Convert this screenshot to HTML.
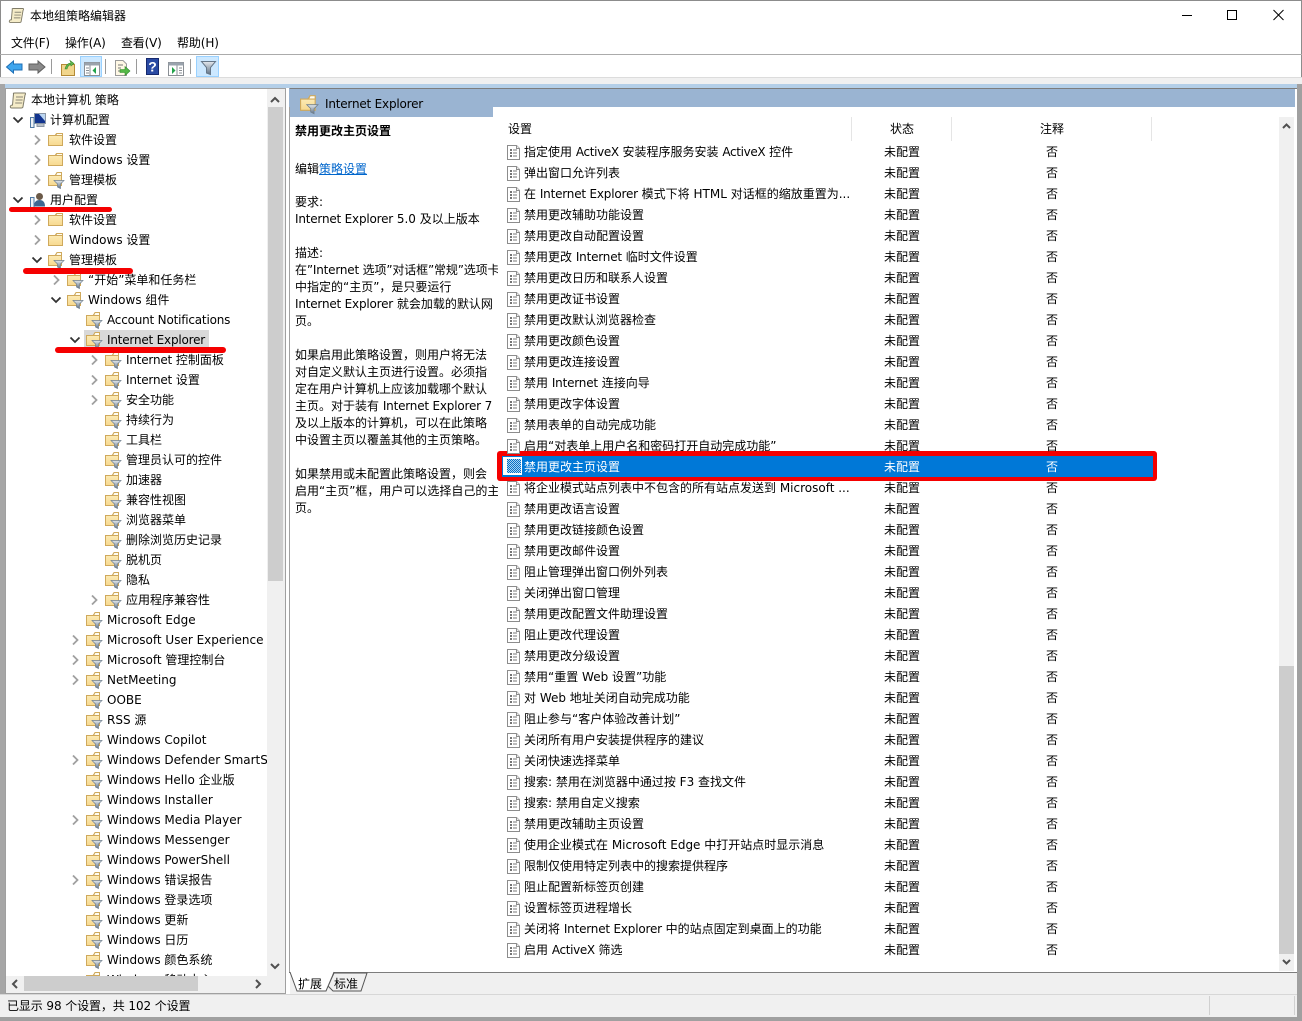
<!DOCTYPE html>
<html lang="zh"><head><meta charset="utf-8"><title>本地组策略编辑器</title>
<style>
html,body{margin:0;padding:0;width:1302px;height:1021px;overflow:hidden;background:#fff}
body{position:relative;font:12px/20px "DejaVu Sans","Noto Sans CJK SC",sans-serif;color:#000}
em{font-style:normal;letter-spacing:-.2px}
em.x{letter-spacing:-.35px}
.a{position:absolute;white-space:nowrap}
svg{position:absolute;overflow:visible}
#tree{position:absolute;left:6px;top:90px;width:261px;height:886px;overflow:hidden;background:#fff}
#tree>div{margin-left:-6px}
.n{position:relative;height:20px;white-space:nowrap}
.n svg{top:0;left:0}
.n span{position:absolute;top:0;white-space:nowrap}
.l0 span{left:50px}.l1 span{left:69px}.l2 span{left:88px}.l3 span{left:107px}.l4 span{left:126px}
#list{position:absolute;left:498px;top:142px;width:781px;height:829px;overflow:hidden}
.r{position:relative;height:21px;line-height:21px;white-space:nowrap}
.r b,.r i,.r u{position:absolute;top:0;font-weight:normal;font-style:normal;text-decoration:none}
.r b{left:26px;width:330px;overflow:hidden}.r i{left:386px}.r u{left:548px}
.r svg{left:9px;top:3px}
#d{position:absolute;left:0;top:1px}
#d div{position:absolute;left:295px;white-space:nowrap;width:203px;overflow:hidden;line-height:17px}
</style></head><body>
<svg width="0" height="0" style="position:absolute">
<defs>
<linearGradient id="fg" x1="0" y1="0" x2="0" y2="1"><stop offset="0" stop-color="#fdeebc"/><stop offset="1" stop-color="#f7d98f"/></linearGradient>
<linearGradient id="fl" x1="0" y1="0" x2="0" y2="1"><stop offset="0" stop-color="#e4e9ee"/><stop offset="1" stop-color="#5f7183"/></linearGradient>
<pattern id="dith" width="2" height="2" patternUnits="userSpaceOnUse"><rect width="2" height="2" fill="#0a6fc4"/><rect width="1" height="1" fill="#a8d4f3"/><rect x="1" y="1" width="1" height="1" fill="#a8d4f3"/></pattern>
<symbol id="folder" viewBox="0 0 16 16" overflow="visible"><path d="M.5 4.500V14.500H14.500V2.500H8.500L7 4.500Z" fill="url(#fg)" stroke="#cfa95c"/><path d="M9 2.500h5.500V4.500H7.500Z" fill="#fffdf2" stroke="#cfa95c"/></symbol>
<symbol id="ffolder" viewBox="0 0 16 16" overflow="visible"><path d="M.5 4.500V14.500H13.500V2.500H8.500L7 4.500Z" fill="url(#fg)" stroke="#cfa95c"/><path d="M9 1.500h4.500V4.500H7.500Z" fill="#fffdf2" stroke="#cfa95c"/><path d="M6 9.500H16L12.500 13V17.500L9.500 16V13Z" fill="url(#fl)" stroke="#6f7f8e" stroke-width=".7"/></symbol>
<symbol id="doc" viewBox="0 0 13 15" overflow="visible"><path d="M.5.5H9.500L12.500 3.500V14.500H.5Z" fill="#fff" stroke="#8c8c8c"/><path d="M9.500.5V3.500H12.500" fill="#eee" stroke="#8c8c8c"/><path d="M3 5h2M3 8h2M3 11h2" stroke="#222" stroke-width="1.300"/><path d="M6 5h4M6 8h4M6 11h4" stroke="#777"/></symbol>
<symbol id="cr" viewBox="0 0 10 20" overflow="visible"><path d="M2 5.500L6.500 10L2 14.500" fill="none" stroke="#a0a0a0" stroke-width="1.800"/></symbol>
<symbol id="cd" viewBox="0 0 10 20" overflow="visible"><path d="M.5 7.500L5 12L9.500 7.500" fill="none" stroke="#333" stroke-width="1.800"/></symbol>
<symbol id="scroll" viewBox="0 0 16 16" overflow="visible"><path d="M3.500 1.500C3 .5 4 .5 5 .5H15C15.500 .5 15.800 1.500 15 2.500L13 14C13 15 12 15.500 11 15.500H1.500C.5 15.500 0 14.500 .5 13.500 1 12.500 2 12.500 2.500 12.500Z" fill="#f5ecc8" stroke="#7f7b68"/><path d="M6 4.500h7M5.600 7.500h7M5.200 10.500h7" stroke="#8a8676"/></symbol>
</defs></svg>

<!-- window frame -->
<div class="a" style="left:0;top:0;width:1302px;height:1px;background:#8c8c8c"></div>
<div class="a" style="left:0;top:0;width:1px;height:85px;background:#8c8c8c"></div>
<div class="a" style="left:1301px;top:0;width:1px;height:85px;background:#8c8c8c"></div>

<!-- title -->
<svg style="left:9px;top:7px" width="15" height="17"><use href="#scroll" width="15" height="17"/></svg>
<div class="a" style="left:30px;top:6px">本地组策略编辑器</div>
<svg style="left:1180px;top:9px" width="120" height="14"><path d="M2 6.500H12" stroke="#000"/><rect x="47.500" y="1.500" width="9" height="9" fill="none" stroke="#000"/><path d="M93.500 1L103.500 11M103.500 1L93.500 11" stroke="#000"/></svg>

<!-- menu -->
<div class="a" style="left:11px;top:33px;letter-spacing:-.3px">文件(F)</div>
<div class="a" style="left:65px;top:33px;letter-spacing:-.2px">操作(A)</div>
<div class="a" style="left:121px;top:33px;letter-spacing:-.2px">查看(V)</div>
<div class="a" style="left:177px;top:33px;letter-spacing:-.1px">帮助(H)</div>
<div class="a" style="left:0;top:54px;width:1302px;height:1px;background:#ababab"></div>

<!-- toolbar -->
<div class="a" style="left:80px;top:56px;width:22px;height:21px;background:#cce8ff;border:1px solid #99d1ff;box-sizing:border-box"></div>
<div class="a" style="left:196px;top:56px;width:23px;height:21px;background:#cce8ff;border:1px solid #99d1ff;box-sizing:border-box"></div>
<svg style="left:0;top:55px" width="230" height="23">
<path d="M6.500 12L13.500 6V9H22V15H13.500V18Z" fill="#3fa6ee" stroke="#1f6fb5"/>
<path d="M45 12L38 6V9H29V15H38V18Z" fill="#8a8a8a" stroke="#5f5f5f"/>
<path d="M51.500 4V19M105.500 4V19M136.500 4V19M190.500 4V19" stroke="#9a9a9a"/>
<path d="M61.500 9.500V20.500H74.500V9.500Z" fill="#f1d58b" stroke="#b48a35"/>
<path d="M65 14C66 10 68 8 71 8L70 5.500L74 8.500L71 11L70.500 9.500C69 10 67.500 12 67 14Z" fill="#5fb84d" stroke="#3b8a2e" stroke-width=".6"/>
<rect x="84.500" y="7.500" width="15" height="13" fill="#fff" stroke="#8a8f95"/><rect x="84.500" y="7.500" width="15" height="3" fill="#9aa3ad"/>
<path d="M90 10.500V20.500" stroke="#8a8f95"/><path d="M86 13h3M86 15.500h3M86 18h3" stroke="#8a8f95"/><path d="M96 12V19L92.500 15.500Z" fill="#22a34a"/>
<path d="M115.500 5.500H123L126.500 9V20.500H115.500Z" fill="#fff8e5" stroke="#9a9a9a"/><path d="M118 10h5M118 13h3M118 16h3" stroke="#777"/>
<path d="M120 14.500H125V11.500L130 16L125 20.500V17.500H120Z" fill="#55b947" stroke="#2f8b2a" stroke-width=".6"/>
<rect x="146.500" y="3.500" width="12" height="16" fill="#2a4aa3" stroke="#16296e"/>
<text x="152.500" y="16.500" font-family="Liberation Sans,sans-serif" font-size="14" font-weight="bold" fill="#fff" text-anchor="middle">?</text>
<rect x="168.500" y="7.500" width="15" height="13" fill="#fff" stroke="#8a8f95"/><rect x="168.500" y="7.500" width="15" height="3" fill="#9aa3ad"/>
<path d="M177 10.500V20.500" stroke="#8a8f95"/><path d="M179 13h3M179 15.500h3M179 18h3" stroke="#8a8f95"/><path d="M172 12V19L175.500 15.500Z" fill="#22a34a"/>
<path d="M201.500 6.500H215.500L210.500 12.500V19.500L206.500 18V12.500Z" fill="url(#fl)" stroke="#667788"/>
</svg>
<div class="a" style="left:0;top:77px;width:1302px;height:1px;background:#dcdcdc"></div>
<div class="a" style="left:0;top:78px;width:1302px;height:6px;background:#f0f0f0"></div>
<div class="a" style="left:5px;top:84px;width:1292px;height:4px;background:#b4cfe8"></div>
<div class="a" style="left:0;top:84px;width:5px;height:910px;background:#a6a6a6"></div>

<!-- left pane -->
<div class="a" style="left:5px;top:88px;width:279px;height:904px;border:1px solid #a0a0a0;background:#fff"></div>
<div id="tree">
<div class="n" style="height:20px"><svg style="left:10px;top:2px" width="16" height="17"><use href="#scroll" width="16" height="17"/></svg><span style="left:31px">本地计算机 策略</span></div>
<div class="n l0"><svg style="left:13px" width="10" height="20"><use href="#cd" width="10" height="20"/></svg><svg style="left:30px;top:2px" width="16" height="16"><path d="M4.500 1.500H15.500V11.500H4.500Z" fill="#12348f" stroke="#8a96a5"/><path d="M9 2h6v7z" fill="#bcd6f2"/><path d="M7 12V14.500H14V12" fill="#b9c0c8" stroke="#8a96a5"/><rect x=".5" y="5.500" width="3.500" height="10" fill="#eef2f6" stroke="#4f78a3"/></svg><span>计算机配置</span></div>
<div class="n l1"><svg style="left:33px" width="10" height="20"><use href="#cr" width="10" height="20"/></svg><svg style="left:48px;top:1px" width="16" height="16"><use href="#folder" width="16" height="16"/></svg><span>软件设置</span></div>
<div class="n l1"><svg style="left:33px" width="10" height="20"><use href="#cr" width="10" height="20"/></svg><svg style="left:48px;top:1px" width="16" height="16"><use href="#folder" width="16" height="16"/></svg><span>Windows 设置</span></div>
<div class="n l1"><svg style="left:33px" width="10" height="20"><use href="#cr" width="10" height="20"/></svg><svg style="left:48px;top:1px" width="16" height="16"><use href="#ffolder" width="16" height="16"/></svg><span>管理模板</span></div>
<div class="n l0"><svg style="left:13px" width="10" height="20"><use href="#cd" width="10" height="20"/></svg><svg style="left:30px;top:2px" width="16" height="16"><circle cx="9.500" cy="4.500" r="3.500" fill="#6b5a48"/><path d="M4 14.500C4 10 6 8 9.500 8S15 10 15 14.500Z" fill="#3e6690"/><rect x=".5" y="5.500" width="3.500" height="10" fill="#eef2f6" stroke="#4f78a3"/></svg><span>用户配置</span></div>
<div class="n l1"><svg style="left:33px" width="10" height="20"><use href="#cr" width="10" height="20"/></svg><svg style="left:48px;top:1px" width="16" height="16"><use href="#folder" width="16" height="16"/></svg><span>软件设置</span></div>
<div class="n l1"><svg style="left:33px" width="10" height="20"><use href="#cr" width="10" height="20"/></svg><svg style="left:48px;top:1px" width="16" height="16"><use href="#folder" width="16" height="16"/></svg><span>Windows 设置</span></div>
<div class="n l1"><svg style="left:32px" width="10" height="20"><use href="#cd" width="10" height="20"/></svg><svg style="left:48px;top:1px" width="16" height="16"><use href="#ffolder" width="16" height="16"/></svg><span>管理模板</span></div>
<div class="n l2"><svg style="left:52px" width="10" height="20"><use href="#cr" width="10" height="20"/></svg><svg style="left:67px;top:1px" width="16" height="16"><use href="#ffolder" width="16" height="16"/></svg><span>“开始”菜单和任务栏</span></div>
<div class="n l2"><svg style="left:51px" width="10" height="20"><use href="#cd" width="10" height="20"/></svg><svg style="left:67px;top:1px" width="16" height="16"><use href="#ffolder" width="16" height="16"/></svg><span>Windows 组件</span></div>
<div class="n l3"><svg style="left:86px;top:1px" width="16" height="16"><use href="#ffolder" width="16" height="16"/></svg><span><em>Account Notifications</em></span></div>
<div class="n l3"><div style="position:absolute;left:84px;top:0;width:125px;height:19px;background:#d9d9d9"></div><svg style="left:70px" width="10" height="20"><use href="#cd" width="10" height="20"/></svg><svg style="left:86px;top:1px" width="16" height="16"><use href="#ffolder" width="16" height="16"/></svg><span><em>Internet Explorer</em></span></div>
<div class="n l4"><svg style="left:90px" width="10" height="20"><use href="#cr" width="10" height="20"/></svg><svg style="left:105px;top:1px" width="16" height="16"><use href="#ffolder" width="16" height="16"/></svg><span><em>Internet</em> 控制面板</span></div>
<div class="n l4"><svg style="left:90px" width="10" height="20"><use href="#cr" width="10" height="20"/></svg><svg style="left:105px;top:1px" width="16" height="16"><use href="#ffolder" width="16" height="16"/></svg><span><em>Internet</em> 设置</span></div>
<div class="n l4"><svg style="left:90px" width="10" height="20"><use href="#cr" width="10" height="20"/></svg><svg style="left:105px;top:1px" width="16" height="16"><use href="#ffolder" width="16" height="16"/></svg><span>安全功能</span></div>
<div class="n l4"><svg style="left:105px;top:1px" width="16" height="16"><use href="#ffolder" width="16" height="16"/></svg><span>持续行为</span></div>
<div class="n l4"><svg style="left:105px;top:1px" width="16" height="16"><use href="#ffolder" width="16" height="16"/></svg><span>工具栏</span></div>
<div class="n l4"><svg style="left:105px;top:1px" width="16" height="16"><use href="#ffolder" width="16" height="16"/></svg><span>管理员认可的控件</span></div>
<div class="n l4"><svg style="left:105px;top:1px" width="16" height="16"><use href="#ffolder" width="16" height="16"/></svg><span>加速器</span></div>
<div class="n l4"><svg style="left:105px;top:1px" width="16" height="16"><use href="#ffolder" width="16" height="16"/></svg><span>兼容性视图</span></div>
<div class="n l4"><svg style="left:105px;top:1px" width="16" height="16"><use href="#ffolder" width="16" height="16"/></svg><span>浏览器菜单</span></div>
<div class="n l4"><svg style="left:105px;top:1px" width="16" height="16"><use href="#ffolder" width="16" height="16"/></svg><span>删除浏览历史记录</span></div>
<div class="n l4"><svg style="left:105px;top:1px" width="16" height="16"><use href="#ffolder" width="16" height="16"/></svg><span>脱机页</span></div>
<div class="n l4"><svg style="left:105px;top:1px" width="16" height="16"><use href="#ffolder" width="16" height="16"/></svg><span>隐私</span></div>
<div class="n l4"><svg style="left:90px" width="10" height="20"><use href="#cr" width="10" height="20"/></svg><svg style="left:105px;top:1px" width="16" height="16"><use href="#ffolder" width="16" height="16"/></svg><span>应用程序兼容性</span></div>
<div class="n l3"><svg style="left:86px;top:1px" width="16" height="16"><use href="#ffolder" width="16" height="16"/></svg><span>Microsoft Edge</span></div>
<div class="n l3"><svg style="left:71px" width="10" height="20"><use href="#cr" width="10" height="20"/></svg><svg style="left:86px;top:1px" width="16" height="16"><use href="#ffolder" width="16" height="16"/></svg><span>Microsoft User Experience Virtualization</span></div>
<div class="n l3"><svg style="left:71px" width="10" height="20"><use href="#cr" width="10" height="20"/></svg><svg style="left:86px;top:1px" width="16" height="16"><use href="#ffolder" width="16" height="16"/></svg><span>Microsoft 管理控制台</span></div>
<div class="n l3"><svg style="left:71px" width="10" height="20"><use href="#cr" width="10" height="20"/></svg><svg style="left:86px;top:1px" width="16" height="16"><use href="#ffolder" width="16" height="16"/></svg><span>NetMeeting</span></div>
<div class="n l3"><svg style="left:86px;top:1px" width="16" height="16"><use href="#ffolder" width="16" height="16"/></svg><span>OOBE</span></div>
<div class="n l3"><svg style="left:86px;top:1px" width="16" height="16"><use href="#ffolder" width="16" height="16"/></svg><span>RSS 源</span></div>
<div class="n l3"><svg style="left:86px;top:1px" width="16" height="16"><use href="#ffolder" width="16" height="16"/></svg><span>Windows Copilot</span></div>
<div class="n l3"><svg style="left:71px" width="10" height="20"><use href="#cr" width="10" height="20"/></svg><svg style="left:86px;top:1px" width="16" height="16"><use href="#ffolder" width="16" height="16"/></svg><span>Windows Defender SmartScreen</span></div>
<div class="n l3"><svg style="left:86px;top:1px" width="16" height="16"><use href="#ffolder" width="16" height="16"/></svg><span>Windows Hello 企业版</span></div>
<div class="n l3"><svg style="left:86px;top:1px" width="16" height="16"><use href="#ffolder" width="16" height="16"/></svg><span>Windows Installer</span></div>
<div class="n l3"><svg style="left:71px" width="10" height="20"><use href="#cr" width="10" height="20"/></svg><svg style="left:86px;top:1px" width="16" height="16"><use href="#ffolder" width="16" height="16"/></svg><span>Windows Media Player</span></div>
<div class="n l3"><svg style="left:86px;top:1px" width="16" height="16"><use href="#ffolder" width="16" height="16"/></svg><span>Windows Messenger</span></div>
<div class="n l3"><svg style="left:86px;top:1px" width="16" height="16"><use href="#ffolder" width="16" height="16"/></svg><span>Windows PowerShell</span></div>
<div class="n l3"><svg style="left:71px" width="10" height="20"><use href="#cr" width="10" height="20"/></svg><svg style="left:86px;top:1px" width="16" height="16"><use href="#ffolder" width="16" height="16"/></svg><span>Windows 错误报告</span></div>
<div class="n l3"><svg style="left:86px;top:1px" width="16" height="16"><use href="#ffolder" width="16" height="16"/></svg><span>Windows 登录选项</span></div>
<div class="n l3"><svg style="left:86px;top:1px" width="16" height="16"><use href="#ffolder" width="16" height="16"/></svg><span>Windows 更新</span></div>
<div class="n l3"><svg style="left:86px;top:1px" width="16" height="16"><use href="#ffolder" width="16" height="16"/></svg><span>Windows 日历</span></div>
<div class="n l3"><svg style="left:86px;top:1px" width="16" height="16"><use href="#ffolder" width="16" height="16"/></svg><span>Windows 颜色系统</span></div>
<div class="n l3"><svg style="left:86px;top:1px" width="16" height="16"><use href="#ffolder" width="16" height="16"/></svg><span>Windows 移动中心</span></div>
</div>
<!-- left scrollbars -->
<div class="a" style="left:267px;top:89px;width:18px;height:887px;background:#f0f0f0"></div>
<div class="a" style="left:268px;top:107px;width:15px;height:474px;background:#cdcdcd"></div>
<div class="a" style="left:6px;top:976px;width:279px;height:17px;background:#f0f0f0"></div>
<div class="a" style="left:24px;top:976px;width:174px;height:15px;background:#cdcdcd"></div>
<svg style="left:0;top:88px" width="290" height="905"><g fill="none" stroke="#505050" stroke-width="2"><path d="M271 14L275 10L279 14"/><path d="M271 876L275 880L279 876"/><path d="M17 892L13 896L17 900"/><path d="M256 892L260 896L256 900"/></g></svg>

<!-- right pane -->
<div class="a" style="left:289px;top:88px;width:1008px;height:1px;background:#7d7d7d"></div>
<div class="a" style="left:289px;top:88px;width:1px;height:885px;background:#a0a0a0"></div>
<div class="a" style="left:289px;top:89px;width:1006px;height:18px;background:#9ab4d2"></div>
<div class="a" style="left:290px;top:107px;width:203px;height:10px;background:#9ab4d2"></div>
<div class="a" style="left:493px;top:107px;width:802px;height:12px;background:#fff;border-top-left-radius:8px"></div>
<svg style="left:300px;top:94px" width="18" height="18"><use href="#ffolder" width="18" height="18"/></svg>
<div class="a" style="left:325px;top:94px"><em>Internet Explorer</em></div>

<div id="d">
<div style="top:122px;font-weight:bold">禁用更改主页设置</div>
<div style="top:160px">编辑<span style="color:#0066cc;text-decoration:underline">策略设置</span></div>
<div style="top:193px">要求:</div>
<div style="top:210px"><em>Internet Explorer</em> 5.0 及以上版本</div>
<div style="top:244px">描述:</div>
<div style="top:261px;letter-spacing:-.15px">在”<em>Internet</em> 选项”对话框”常规”选项卡</div>
<div style="top:278px">中指定的“主页”，是只要运行</div>
<div style="top:295px"><em>Internet Explorer</em> 就会加载的默认网</div>
<div style="top:312px">页。</div>
<div style="top:346px">如果启用此策略设置，则用户将无法</div>
<div style="top:363px">对自定义默认主页进行设置。必须指</div>
<div style="top:380px">定在用户计算机上应该加载哪个默认</div>
<div style="top:397px">主页。对于装有 <em>Internet Explorer</em> 7</div>
<div style="top:414px">及以上版本的计算机，可以在此策略</div>
<div style="top:431px">中设置主页以覆盖其他的主页策略。</div>
<div style="top:465px">如果禁用或未配置此策略设置，则会</div>
<div style="top:482px">启用“主页”框，用户可以选择自己的主</div>
<div style="top:499px">页。</div>
</div>

<!-- list header -->
<div class="a" style="left:508px;top:119px">设置</div>
<div class="a" style="left:890px;top:119px">状态</div>
<div class="a" style="left:1040px;top:119px">注释</div>
<div class="a" style="left:851px;top:117px;width:1px;height:24px;background:#e5e5e5"></div>
<div class="a" style="left:951px;top:117px;width:1px;height:24px;background:#e5e5e5"></div>
<div class="a" style="left:1151px;top:117px;width:1px;height:24px;background:#e5e5e5"></div>

<!-- selection highlight -->
<div class="a" style="left:497px;top:451px;width:660px;height:30px;background:#f50000;border-radius:3px"></div>
<div class="a" style="left:502px;top:456px;width:651px;height:21px;background:#0078d7"></div>

<div id="list">
<div class="r"><svg width="13" height="15"><use href="#doc" width="13" height="15"/></svg><b>指定使用 <em class="x">ActiveX</em> 安装程序服务安装 <em class="x">ActiveX</em> 控件</b><i>未配置</i><u>否</u></div>
<div class="r"><svg width="13" height="15"><use href="#doc" width="13" height="15"/></svg><b>弹出窗口允许列表</b><i>未配置</i><u>否</u></div>
<div class="r"><svg width="13" height="15"><use href="#doc" width="13" height="15"/></svg><b>在 <em>Internet Explorer</em> 模式下将 HTML 对话框的缩放重置为...</b><i>未配置</i><u>否</u></div>
<div class="r"><svg width="13" height="15"><use href="#doc" width="13" height="15"/></svg><b>禁用更改辅助功能设置</b><i>未配置</i><u>否</u></div>
<div class="r"><svg width="13" height="15"><use href="#doc" width="13" height="15"/></svg><b>禁用更改自动配置设置</b><i>未配置</i><u>否</u></div>
<div class="r"><svg width="13" height="15"><use href="#doc" width="13" height="15"/></svg><b>禁用更改 <em>Internet</em> 临时文件设置</b><i>未配置</i><u>否</u></div>
<div class="r"><svg width="13" height="15"><use href="#doc" width="13" height="15"/></svg><b>禁用更改日历和联系人设置</b><i>未配置</i><u>否</u></div>
<div class="r"><svg width="13" height="15"><use href="#doc" width="13" height="15"/></svg><b>禁用更改证书设置</b><i>未配置</i><u>否</u></div>
<div class="r"><svg width="13" height="15"><use href="#doc" width="13" height="15"/></svg><b>禁用更改默认浏览器检查</b><i>未配置</i><u>否</u></div>
<div class="r"><svg width="13" height="15"><use href="#doc" width="13" height="15"/></svg><b>禁用更改颜色设置</b><i>未配置</i><u>否</u></div>
<div class="r"><svg width="13" height="15"><use href="#doc" width="13" height="15"/></svg><b>禁用更改连接设置</b><i>未配置</i><u>否</u></div>
<div class="r"><svg width="13" height="15"><use href="#doc" width="13" height="15"/></svg><b>禁用 <em>Internet</em> 连接向导</b><i>未配置</i><u>否</u></div>
<div class="r"><svg width="13" height="15"><use href="#doc" width="13" height="15"/></svg><b>禁用更改字体设置</b><i>未配置</i><u>否</u></div>
<div class="r"><svg width="13" height="15"><use href="#doc" width="13" height="15"/></svg><b>禁用表单的自动完成功能</b><i>未配置</i><u>否</u></div>
<div class="r"><svg width="13" height="15"><use href="#doc" width="13" height="15"/></svg><b>启用“对表单上用户名和密码打开自动完成功能”</b><i>未配置</i><u>否</u></div>
<div class="r" style="color:#fff"><svg width="13" height="15"><rect x="-4" y="-3" width="19" height="18" fill="#fff"/><rect y="-1" width="14" height="14" fill="url(#dith)"/></svg><b>禁用更改主页设置</b><i>未配置</i><u>否</u></div>
<div class="r"><svg width="13" height="15"><use href="#doc" width="13" height="15"/></svg><b>将企业模式站点列表中不包含的所有站点发送到 Microsoft ...</b><i>未配置</i><u>否</u></div>
<div class="r"><svg width="13" height="15"><use href="#doc" width="13" height="15"/></svg><b>禁用更改语言设置</b><i>未配置</i><u>否</u></div>
<div class="r"><svg width="13" height="15"><use href="#doc" width="13" height="15"/></svg><b>禁用更改链接颜色设置</b><i>未配置</i><u>否</u></div>
<div class="r"><svg width="13" height="15"><use href="#doc" width="13" height="15"/></svg><b>禁用更改邮件设置</b><i>未配置</i><u>否</u></div>
<div class="r"><svg width="13" height="15"><use href="#doc" width="13" height="15"/></svg><b>阻止管理弹出窗口例外列表</b><i>未配置</i><u>否</u></div>
<div class="r"><svg width="13" height="15"><use href="#doc" width="13" height="15"/></svg><b>关闭弹出窗口管理</b><i>未配置</i><u>否</u></div>
<div class="r"><svg width="13" height="15"><use href="#doc" width="13" height="15"/></svg><b>禁用更改配置文件助理设置</b><i>未配置</i><u>否</u></div>
<div class="r"><svg width="13" height="15"><use href="#doc" width="13" height="15"/></svg><b>阻止更改代理设置</b><i>未配置</i><u>否</u></div>
<div class="r"><svg width="13" height="15"><use href="#doc" width="13" height="15"/></svg><b>禁用更改分级设置</b><i>未配置</i><u>否</u></div>
<div class="r"><svg width="13" height="15"><use href="#doc" width="13" height="15"/></svg><b>禁用“重置 Web 设置”功能</b><i>未配置</i><u>否</u></div>
<div class="r"><svg width="13" height="15"><use href="#doc" width="13" height="15"/></svg><b>对 Web 地址关闭自动完成功能</b><i>未配置</i><u>否</u></div>
<div class="r"><svg width="13" height="15"><use href="#doc" width="13" height="15"/></svg><b>阻止参与“客户体验改善计划”</b><i>未配置</i><u>否</u></div>
<div class="r"><svg width="13" height="15"><use href="#doc" width="13" height="15"/></svg><b>关闭所有用户安装提供程序的建议</b><i>未配置</i><u>否</u></div>
<div class="r"><svg width="13" height="15"><use href="#doc" width="13" height="15"/></svg><b>关闭快速选择菜单</b><i>未配置</i><u>否</u></div>
<div class="r"><svg width="13" height="15"><use href="#doc" width="13" height="15"/></svg><b>搜索: 禁用在浏览器中通过按 F3 查找文件</b><i>未配置</i><u>否</u></div>
<div class="r"><svg width="13" height="15"><use href="#doc" width="13" height="15"/></svg><b>搜索: 禁用自定义搜索</b><i>未配置</i><u>否</u></div>
<div class="r"><svg width="13" height="15"><use href="#doc" width="13" height="15"/></svg><b>禁用更改辅助主页设置</b><i>未配置</i><u>否</u></div>
<div class="r"><svg width="13" height="15"><use href="#doc" width="13" height="15"/></svg><b>使用企业模式在 Microsoft Edge 中打开站点时显示消息</b><i>未配置</i><u>否</u></div>
<div class="r"><svg width="13" height="15"><use href="#doc" width="13" height="15"/></svg><b>限制仅使用特定列表中的搜索提供程序</b><i>未配置</i><u>否</u></div>
<div class="r"><svg width="13" height="15"><use href="#doc" width="13" height="15"/></svg><b>阻止配置新标签页创建</b><i>未配置</i><u>否</u></div>
<div class="r"><svg width="13" height="15"><use href="#doc" width="13" height="15"/></svg><b>设置标签页进程增长</b><i>未配置</i><u>否</u></div>
<div class="r"><svg width="13" height="15"><use href="#doc" width="13" height="15"/></svg><b>关闭将 <em>Internet Explorer</em> 中的站点固定到桌面上的功能</b><i>未配置</i><u>否</u></div>
<div class="r"><svg width="13" height="15"><use href="#doc" width="13" height="15"/></svg><b>启用 <em class="x">ActiveX</em> 筛选</b><i>未配置</i><u>否</u></div>
</div>

<!-- right scrollbar -->
<div class="a" style="left:1279px;top:117px;width:15px;height:854px;background:#f0f0f0"></div>
<div class="a" style="left:1279px;top:666px;width:15px;height:288px;background:#cdcdcd"></div>
<svg style="left:1279px;top:117px" width="15" height="854"><g fill="none" stroke="#505050" stroke-width="2"><path d="M4 11L7.500 7.500L11 11"/><path d="M4 843L7.500 846.500L11 843"/></g></svg>

<!-- tab bar -->
<div class="a" style="left:289px;top:972px;width:1008px;height:1px;background:#7d7d7d"></div>
<div class="a" style="left:290px;top:973px;width:1007px;height:21px;background:#f0f0f0"></div>
<svg style="left:288px;top:972px" width="82" height="22">
<path d="M40 14L46 1H79L73 19H45Z" fill="#f0f0f0" stroke="#555"/>
<path d="M2 0L9 19H38L44 5L46 0" fill="#fff" stroke="#555"/>
</svg>
<div class="a" style="left:298px;top:974px">扩展</div>
<div class="a" style="left:334px;top:974px">标准</div>

<!-- status bar -->
<div class="a" style="left:0;top:994px;width:1297px;height:1px;background:#d7d7d7"></div>
<div class="a" style="left:0;top:995px;width:1297px;height:22px;background:#f0f0f0"></div>
<div class="a" style="left:7px;top:996px;letter-spacing:-.1px">已显示 98 个设置，共 102 个设置</div>
<div class="a" style="left:1209px;top:996px;width:1px;height:19px;background:#d0d0d0"></div>
<div class="a" style="left:1294px;top:996px;width:1px;height:19px;background:#d0d0d0"></div>
<div class="a" style="left:1297px;top:84px;width:5px;height:937px;background:#a0a0a0"></div>
<div class="a" style="left:0;top:1017px;width:1302px;height:4px;background:#a0a0a0"></div>

<!-- red annotations -->
<div class="a" style="left:9px;top:207px;width:103px;height:5px;background:#f50000;border-radius:3px"></div>
<div class="a" style="left:23px;top:268px;width:110px;height:6px;background:#f50000;border-radius:3px"></div>
<div class="a" style="left:55px;top:347px;width:171px;height:6px;background:#f50000;border-radius:3px"></div>
</body></html>
